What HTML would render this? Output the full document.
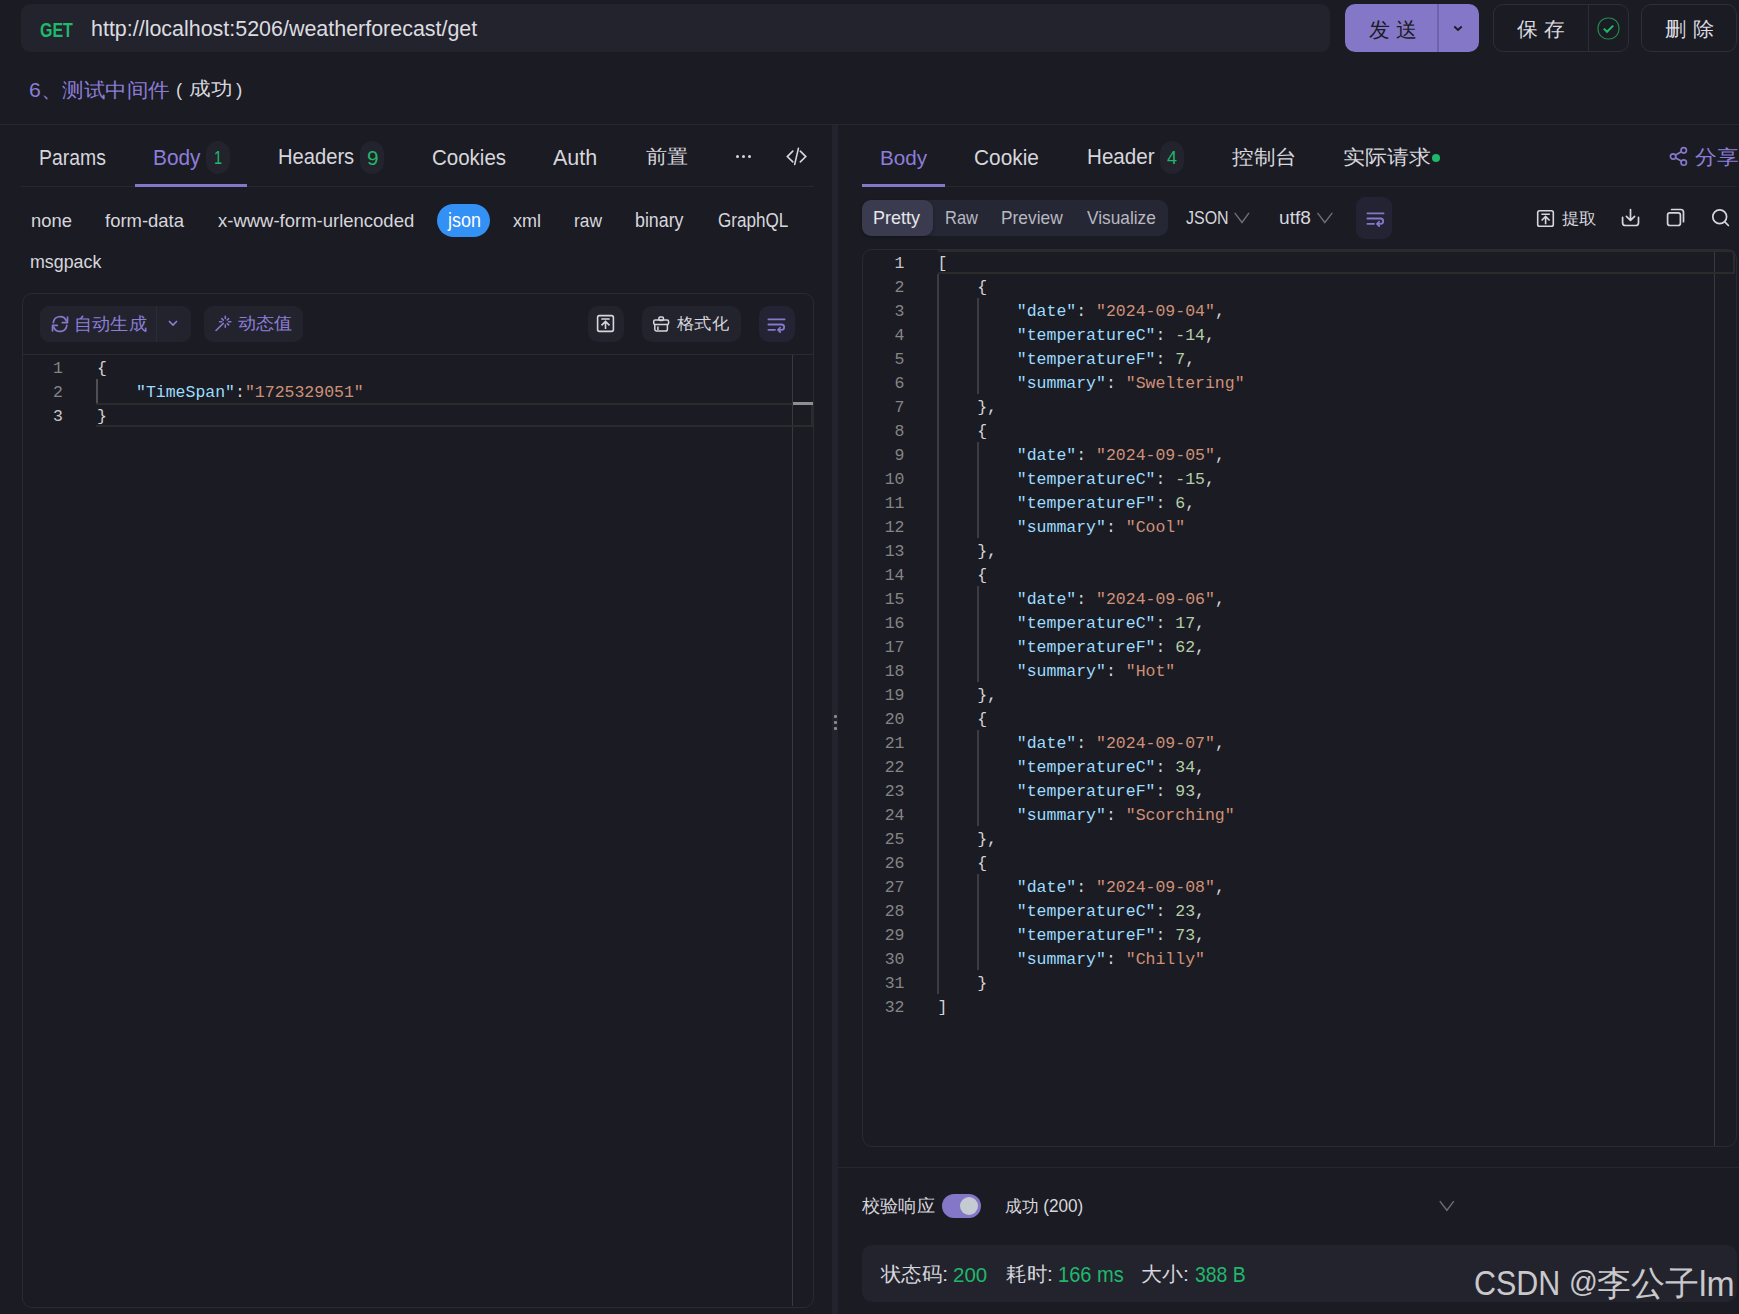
<!DOCTYPE html>
<html><head><meta charset="utf-8">
<style>
*{margin:0;padding:0;box-sizing:border-box}
html,body{width:1739px;height:1314px;overflow:hidden;background:#1b1b23;font-family:"Liberation Sans",sans-serif;color:#d6d6dc}
.a{position:absolute;white-space:nowrap}
.box{position:absolute}
.mono{font-family:"Liberation Mono",monospace}
.k{color:#9cdcfe}.s{color:#ce9178}.n{color:#b5cea8}.p{color:#d4d4d4}
.ln{position:absolute;text-align:right;color:#858585}
</style></head><body>
<!-- top URL bar -->
<div class="box" style="left:21px;top:4px;width:1309px;height:48px;background:#23232d;border-radius:9px"></div>
<!-- send -->
<div class="box" style="left:1345px;top:4px;width:134px;height:48px;background:#8577c8;border-radius:10px"></div>
<div class="box" style="left:1437px;top:4px;width:2px;height:48px;background:#6f62ad"></div>
<svg class="box" style="left:1450px;top:21px" width="16" height="14" viewBox="0 0 16 14"><path d="M4.3 5.5 L8 9 L11.7 5.5" stroke="#1b1b23" stroke-width="1.9" fill="none"/></svg>
<!-- save -->
<div class="box" style="left:1493px;top:4px;width:136px;height:48px;border:1px solid #2e2e3a;border-radius:10px"></div>
<div class="box" style="left:1588px;top:4px;width:1px;height:48px;background:#2e2e3a"></div>
<svg class="box" style="left:1597px;top:17px" width="23" height="23" viewBox="0 0 23 23"><rect x="1" y="1" width="21" height="21" rx="10" fill="none" stroke="#23884f" stroke-width="1.2"/><path d="M6.8 11.6 L10 14.8 L16.2 8.6" stroke="#1fb96a" stroke-width="2" fill="none"/></svg>
<!-- delete -->
<div class="box" style="left:1641px;top:4px;width:96px;height:48px;border:1px solid #2e2e3a;border-radius:10px"></div>
<div class="box" style="left:0;top:124px;width:1739px;height:1px;background:#272732"></div>

<!-- divider column -->
<div class="box" style="left:832px;top:125px;width:6px;height:1189px;background:#23232d"></div>
<div class="box" style="left:834px;top:715px;width:3px;height:3px;background:#8a8a8a;border-radius:1px"></div>
<div class="box" style="left:834px;top:721px;width:3px;height:3px;background:#8a8a8a;border-radius:1px"></div>
<div class="box" style="left:834px;top:727px;width:3px;height:3px;background:#8a8a8a;border-radius:1px"></div>

<!-- left tabs -->
<div class="box" style="left:206px;top:141px;width:24px;height:33px;border-radius:12px;background:#23232d"></div>
<div class="box" style="left:360px;top:141px;width:24px;height:33px;border-radius:12px;background:#23232d"></div>
<div class="box" style="left:735.7px;top:154.9px;width:3.5px;height:3.5px;background:#d6d6dc;border-radius:50%"></div>
<div class="box" style="left:741.7px;top:154.9px;width:3.5px;height:3.5px;background:#d6d6dc;border-radius:50%"></div>
<div class="box" style="left:747.9px;top:154.9px;width:3.5px;height:3.5px;background:#d6d6dc;border-radius:50%"></div>
<svg class="box" style="left:786px;top:146px" width="22" height="21" viewBox="0 0 22 21"><path d="M6.8 5.1 L1.3 10.6 L6.8 15.9 M14.3 5.1 L19.8 10.6 L14.3 15.9 M12.4 2.4 L8.7 18.4" stroke="#d6d6dc" stroke-width="1.6" fill="none" stroke-linecap="round"/></svg>
<div class="box" style="left:21px;top:186px;width:793px;height:1px;background:#272732"></div>
<div class="box" style="left:135px;top:184px;width:112px;height:3px;background:#8577c8"></div>
<div class="box" style="left:437px;top:204px;width:53px;height:33px;border-radius:17px;background:#3390f5"></div>

<!-- editor container -->
<div class="box" style="left:22px;top:293px;width:792px;height:1015px;border:1px solid #2a2a33;border-radius:10px"></div>
<div class="box" style="left:23px;top:354px;width:790px;height:1px;background:#2a2a33"></div>
<!-- toolbar -->
<div class="box" style="left:40px;top:306px;width:151px;height:36px;border-radius:9px;background:#23232e"></div>
<div class="box" style="left:156px;top:306px;width:1px;height:36px;background:#2c2c38"></div>
<svg class="box" style="left:46px;top:310px" width="30" height="28" viewBox="0 0 30 28"><path d="M7.3 12.6 A6.8 6.8 0 0 1 20.2 10.6 M21.5 7 V12.6 H16.3 M20.8 15.3 A6.8 6.8 0 0 1 7.8 17.3 M6.5 20.8 V15.4 H11.3" stroke="#8677c9" stroke-width="1.7" fill="none" stroke-linecap="round" stroke-linejoin="round"/></svg>
<svg class="box" style="left:165px;top:316px" width="16" height="14" viewBox="0 0 16 14"><path d="M4 5 L8 9 L12 5" stroke="#8c7ed8" stroke-width="1.6" fill="none"/></svg>
<div class="box" style="left:204px;top:306px;width:99px;height:36px;border-radius:9px;background:#23232e"></div>
<svg class="box" style="left:210px;top:310px" width="30" height="28" viewBox="0 0 30 28"><path d="M15.3 6.2 V8.4 M15.3 15.1 V17.3 M9.6 11.7 H11.8 M18.6 11.7 H20.8 M11.8 8.7 L13.3 10.1 M18.6 8.7 L17.2 10.0 M17.2 13.5 L18.6 14.9 M13.3 13.4 L6 20.5" stroke="#8677c9" stroke-width="1.6" fill="none" stroke-linecap="round"/></svg>
<div class="box" style="left:588px;top:306px;width:36px;height:36px;border-radius:10px;background:#23232e"></div>
<svg class="box" style="left:591px;top:309px" width="30" height="30" viewBox="0 0 30 30"><rect x="6.6" y="6.6" width="15.8" height="15.8" rx="1.8" stroke="#d6d6dc" stroke-width="1.6" fill="none"/><path d="M10.3 10 H18.7 M14.5 20.1 V12.6 M10.5 16.4 L14.5 12.4 L18.5 16.4" stroke="#d6d6dc" stroke-width="1.6" fill="none"/></svg>
<div class="box" style="left:642px;top:306px;width:99px;height:36px;border-radius:10px;background:#23232e"></div>
<svg class="box" style="left:645px;top:308px" width="30" height="30" viewBox="0 0 30 30"><rect x="13.9" y="8.9" width="4.5" height="3.6" rx="1.2" stroke="#d6d6dc" stroke-width="1.5" fill="none"/><rect x="8.7" y="12" width="14.9" height="4.4" rx="1.5" stroke="#d6d6dc" stroke-width="1.5" fill="none"/><path d="M9.8 16.4 V21.2 A1.8 1.8 0 0 0 11.6 23 H20.6 A1.8 1.8 0 0 0 22.4 21.2 V16.4 M12.9 18.5 V22" stroke="#d6d6dc" stroke-width="1.5" fill="none"/></svg>
<div class="box" style="left:759px;top:306px;width:36px;height:36px;border-radius:10px;background:#242333"></div>
<svg class="box" style="left:762px;top:309px" width="30" height="30" viewBox="0 0 30 30"><path d="M6.4 10.3 H22.6 M6.4 15.5 H19.5 A2.65 2.65 0 0 1 19.5 20.8 H16.5 M6.4 20.8 H13" stroke="#8677c9" stroke-width="1.8" fill="none" stroke-linecap="round"/><path d="M18.2 18.6 L16 20.8 L18.2 23" stroke="#8677c9" stroke-width="1.8" fill="none" stroke-linecap="round" stroke-linejoin="round"/></svg>

<!-- right tabs -->
<div class="box" style="left:1160px;top:141px;width:24px;height:33px;border-radius:12px;background:#23232d"></div>
<div class="box" style="left:1431.5px;top:154px;width:8px;height:8px;border-radius:50%;background:#1fb86a"></div>
<svg class="box" style="left:1664px;top:142px" width="30" height="30" viewBox="0 0 30 30"><circle cx="19.75" cy="8.33" r="2.7" stroke="#8677c9" stroke-width="1.7" fill="none"/><circle cx="9.13" cy="14.5" r="2.7" stroke="#8677c9" stroke-width="1.7" fill="none"/><circle cx="19.75" cy="20.55" r="2.7" stroke="#8677c9" stroke-width="1.7" fill="none"/><path d="M11.6 13.1 L17.3 9.8 M11.6 15.9 L17.3 19.1" stroke="#8677c9" stroke-width="1.7"/></svg>
<div class="box" style="left:862px;top:186px;width:875px;height:1px;background:#272732"></div>
<div class="box" style="left:862px;top:184px;width:83px;height:3px;background:#8577c8"></div>

<!-- segmented -->
<div class="box" style="left:862px;top:200px;width:306px;height:36px;border-radius:9px;background:#252735"></div>
<div class="box" style="left:862px;top:200px;width:71px;height:36px;border-radius:9px;background:#3b3b4f;box-shadow:0 1px 3px rgba(0,0,0,.35)"></div>
<svg class="box" style="left:1230px;top:208px" width="24" height="20" viewBox="0 0 24 20"><path d="M4.7 4.9 L12 14.5 L19 4.9" stroke="#6e6e78" stroke-width="1.4" fill="none"/></svg>
<svg class="box" style="left:1313px;top:208px" width="24" height="20" viewBox="0 0 24 20"><path d="M4.5 4.9 L11.8 14.5 L19.3 4.9" stroke="#6e6e78" stroke-width="1.4" fill="none"/></svg>
<div class="box" style="left:1356px;top:197px;width:36px;height:42px;border-radius:9px;background:#242333"></div>
<svg class="box" style="left:1360.5px;top:203px" width="30" height="30" viewBox="0 0 30 30"><path d="M6.4 10.3 H22.6 M6.4 15.5 H19.5 A2.65 2.65 0 0 1 19.5 20.8 H16.5 M6.4 20.8 H13" stroke="#8677c9" stroke-width="1.8" fill="none" stroke-linecap="round"/><path d="M18.2 18.6 L16 20.8 L18.2 23" stroke="#8677c9" stroke-width="1.8" fill="none" stroke-linecap="round" stroke-linejoin="round"/></svg>
<svg class="box" style="left:1530px;top:203px" width="30" height="30" viewBox="0 0 30 30"><rect x="7.7" y="7.7" width="15.6" height="15.6" rx="1.8" stroke="#d6d6dc" stroke-width="1.6" fill="none"/><path d="M11.4 11.2 H19.9 M15.6 21.2 V13.8 M11.6 17.5 L15.6 13.5 L19.6 17.5" stroke="#d6d6dc" stroke-width="1.6" fill="none"/></svg>
<svg class="box" style="left:1616px;top:203px" width="30" height="30" viewBox="0 0 30 30"><path d="M14.5 6.6 V17.2 M10.4 13.4 L14.5 17.4 L18.6 13.4 M6.6 14.4 V19.7 A2.8 2.8 0 0 0 9.4 22.5 H19.7 A2.8 2.8 0 0 0 22.5 19.7 V14.4" stroke="#d6d6dc" stroke-width="1.7" fill="none" stroke-linecap="round" stroke-linejoin="round"/></svg>
<svg class="box" style="left:1661px;top:203px" width="30" height="30" viewBox="0 0 30 30"><rect x="6.6" y="9.8" width="12.8" height="12.7" rx="2.3" stroke="#d6d6dc" stroke-width="1.7" fill="none"/><path d="M10.6 6.5 H19.8 A2.7 2.7 0 0 1 22.5 9.2 V18.7" stroke="#d6d6dc" stroke-width="1.7" fill="none" stroke-linecap="round"/></svg>
<svg class="box" style="left:1706px;top:203px" width="30" height="30" viewBox="0 0 30 30"><circle cx="13.7" cy="13.7" r="6.9" stroke="#d6d6dc" stroke-width="1.7" fill="none"/><path d="M18.8 18.8 L22.4 22.5" stroke="#d6d6dc" stroke-width="1.7" stroke-linecap="round"/></svg>

<!-- right editor -->
<div class="box" style="left:862px;top:249px;width:875px;height:898px;border:1px solid #2a2a33;border-radius:10px"></div>

<!-- bottom -->
<div class="box" style="left:838px;top:1167px;width:901px;height:1px;background:#272732"></div>
<div class="box" style="left:942px;top:1194px;width:39px;height:24px;border-radius:12px;background:#8577c8"></div>
<div class="box" style="left:960px;top:1197px;width:18px;height:18px;border-radius:50%;background:#c5cbd3"></div>
<svg class="box" style="left:1435px;top:1195px" width="24" height="20" viewBox="0 0 24 20"><path d="M4.8 6.1 L11.9 15.3 L18.8 6.1" stroke="#6c6f7a" stroke-width="1.4" fill="none"/></svg>
<div class="box" style="left:862px;top:1245px;width:875px;height:57px;border-radius:10px;background:#23232e"></div>

<!-- left code -->
<div class="box" style="left:792px;top:355px;width:1px;height:951px;background:#3a3a3e"></div>
<div class="box" style="left:96px;top:403px;width:717px;height:24px;border:2px solid #2b2b2b;border-left:none"></div>
<div class="box" style="left:793px;top:402px;width:20px;height:3px;background:#8f8f8f"></div>
<div class="box" style="left:96px;top:379px;width:2px;height:24px;background:#505054"></div>
<div class="mono" style="position:absolute;left:0;top:357px;font-size:16.5px;line-height:24px">
<div class="ln" style="left:30px;width:33px;top:0">1</div>
<div class="ln" style="left:30px;width:33px;top:24px">2</div>
<div class="ln" style="left:30px;width:33px;top:48px;color:#c6c6c6">3</div>
<div class="a p" style="left:97px;top:0">{</div>
<div class="a" style="left:136px;top:24px"><span class="k">"TimeSpan"</span><span class="p">:</span><span class="s">"1725329051"</span></div>
<div class="a p" style="left:97px;top:48px">}</div>
</div>
<!-- right code -->
<div class="box" style="left:1714px;top:250px;width:1px;height:896px;background:#3a3a3e"></div>
<div class="box" style="left:938px;top:250px;width:797px;height:24px;border:2px solid #2b2b2b;border-left:none;border-top-right-radius:4px"></div>
<div class="box" style="left:937px;top:274px;width:2px;height:720px;background:#3c3c40"></div>
<div class="box" style="left:977px;top:298px;width:2px;height:96px;background:#3c3c40"></div>
<div class="box" style="left:977px;top:442px;width:2px;height:96px;background:#3c3c40"></div>
<div class="box" style="left:977px;top:586px;width:2px;height:96px;background:#3c3c40"></div>
<div class="box" style="left:977px;top:730px;width:2px;height:96px;background:#3c3c40"></div>
<div class="box" style="left:977px;top:874px;width:2px;height:96px;background:#3c3c40"></div>
<div class="mono ln" style="left:870.5px;top:252px;width:34px;font-size:16.5px;line-height:24px;white-space:pre"><span style="color:#c6c6c6">1</span>
2
3
4
5
6
7
8
9
10
11
12
13
14
15
16
17
18
19
20
21
22
23
24
25
26
27
28
29
30
31
32</div>
<div class="mono" style="position:absolute;left:937.6px;top:252px;font-size:16.5px;line-height:24px;white-space:pre"><span class="p">[</span>
    <span class="p">{</span>
        <span class="k">"date"</span><span class="p">: </span><span class="s">"2024-09-04"</span><span class="p">,</span>
        <span class="k">"temperatureC"</span><span class="p">: </span><span class="n">-14</span><span class="p">,</span>
        <span class="k">"temperatureF"</span><span class="p">: </span><span class="n">7</span><span class="p">,</span>
        <span class="k">"summary"</span><span class="p">: </span><span class="s">"Sweltering"</span>
    <span class="p">},</span>
    <span class="p">{</span>
        <span class="k">"date"</span><span class="p">: </span><span class="s">"2024-09-05"</span><span class="p">,</span>
        <span class="k">"temperatureC"</span><span class="p">: </span><span class="n">-15</span><span class="p">,</span>
        <span class="k">"temperatureF"</span><span class="p">: </span><span class="n">6</span><span class="p">,</span>
        <span class="k">"summary"</span><span class="p">: </span><span class="s">"Cool"</span>
    <span class="p">},</span>
    <span class="p">{</span>
        <span class="k">"date"</span><span class="p">: </span><span class="s">"2024-09-06"</span><span class="p">,</span>
        <span class="k">"temperatureC"</span><span class="p">: </span><span class="n">17</span><span class="p">,</span>
        <span class="k">"temperatureF"</span><span class="p">: </span><span class="n">62</span><span class="p">,</span>
        <span class="k">"summary"</span><span class="p">: </span><span class="s">"Hot"</span>
    <span class="p">},</span>
    <span class="p">{</span>
        <span class="k">"date"</span><span class="p">: </span><span class="s">"2024-09-07"</span><span class="p">,</span>
        <span class="k">"temperatureC"</span><span class="p">: </span><span class="n">34</span><span class="p">,</span>
        <span class="k">"temperatureF"</span><span class="p">: </span><span class="n">93</span><span class="p">,</span>
        <span class="k">"summary"</span><span class="p">: </span><span class="s">"Scorching"</span>
    <span class="p">},</span>
    <span class="p">{</span>
        <span class="k">"date"</span><span class="p">: </span><span class="s">"2024-09-08"</span><span class="p">,</span>
        <span class="k">"temperatureC"</span><span class="p">: </span><span class="n">23</span><span class="p">,</span>
        <span class="k">"temperatureF"</span><span class="p">: </span><span class="n">73</span><span class="p">,</span>
        <span class="k">"summary"</span><span class="p">: </span><span class="s">"Chilly"</span>
    <span class="p">}</span>
<span class="p">]</span></div>

<div class="a" id="get" style="left:40.00px;top:19.32px;font-size:19.42px;line-height:23px;transform:scaleX(0.8246);transform-origin:0 0;font-weight:bold;color:#1eb96c">GET</div>
<div class="a" id="url" style="left:91.00px;top:14.82px;font-size:22.31px;line-height:27px;transform:scaleX(0.9618);transform-origin:0 0;color:#dcdce0">http://localhost:5206/weatherforecast/get</div>
<div class="a" id="send" style="left:1368.90px;top:16.90px;font-size:21.00px;line-height:25px;color:#1b1b23;letter-spacing:6px">发送</div>
<div class="a" id="save" style="left:1516.90px;top:16.78px;font-size:20.17px;line-height:24px;transform:scaleX(1.0404);transform-origin:0 0;letter-spacing:6px;color:#dcdce0">保存</div>
<div class="a" id="del" style="left:1664.90px;top:16.78px;font-size:20.17px;line-height:24px;transform:scaleX(1.0605);transform-origin:0 0;letter-spacing:6px;color:#dcdce0">删除</div>
<div class="a" id="t1" style="left:29.10px;top:77.90px;font-size:19.78px;line-height:24px;transform:scaleX(1.0760);transform-origin:0 0;color:#8c7ed8">6、测试中间件</div>
<div class="a" id="t2" style="left:175.74px;top:78.05px;font-size:19.09px;line-height:23px;transform:scaleX(0.9587);transform-origin:0 0;">(</div>
<div class="a" id="t3" style="left:188.60px;top:78.26px;font-size:18.68px;line-height:22px;transform:scaleX(1.1384);transform-origin:0 0;">成功</div>
<div class="a" id="t4" style="left:236.10px;top:78.05px;font-size:19.09px;line-height:23px;transform:scaleX(1.0011);transform-origin:0 0;">)</div>
<div class="a" id="params" style="left:38.58px;top:143.68px;font-size:22.69px;line-height:27px;transform:scaleX(0.8557);transform-origin:0 0;">Params</div>
<div class="a" id="lbody" style="left:152.82px;top:144.58px;font-size:21.49px;line-height:26px;transform:scaleX(0.9695);transform-origin:0 0;color:#8c7ed8">Body</div>
<div class="a" id="d1" style="left:213.72px;top:146.18px;font-size:19.15px;line-height:23px;transform:scaleX(0.7661);transform-origin:0 0;color:#1fb86a">1</div>
<div class="a" id="headers" style="left:278.00px;top:144.28px;font-size:21.50px;line-height:26px;transform:scaleX(0.9375);transform-origin:0 0;">Headers</div>
<div class="a" id="d9" style="left:366.64px;top:146.18px;font-size:19.79px;line-height:24px;transform:scaleX(1.0487);transform-origin:0 0;color:#1fb86a">9</div>
<div class="a" id="cookies" style="left:431.58px;top:144.22px;font-size:22.75px;line-height:27px;transform:scaleX(0.9010);transform-origin:0 0;">Cookies</div>
<div class="a" id="auth" style="left:553.36px;top:144.22px;font-size:22.75px;line-height:27px;transform:scaleX(0.9457);transform-origin:0 0;">Auth</div>
<div class="a" id="qz" style="left:646.44px;top:145.12px;font-size:19.00px;line-height:23px;transform:scaleX(1.1100);transform-origin:0 0;">前置</div>
<div class="a" id="none" style="left:30.64px;top:210.94px;font-size:17.62px;line-height:21px;transform:scaleX(1.0458);transform-origin:0 0;">none</div>
<div class="a" id="fd" style="left:105.08px;top:209.08px;font-size:18.78px;line-height:23px;transform:scaleX(0.9833);transform-origin:0 0;">form-data</div>
<div class="a" id="xw" style="left:217.78px;top:209.08px;font-size:18.78px;line-height:23px;transform:scaleX(0.9850);transform-origin:0 0;">x-www-form-urlencoded</div>
<div class="a" id="json" style="left:447.90px;top:209.08px;font-size:19.34px;line-height:23px;transform:scaleX(0.9285);transform-origin:0 0;color:#fff">json</div>
<div class="a" id="xml" style="left:513.00px;top:209.08px;font-size:19.26px;line-height:23px;transform:scaleX(0.9340);transform-origin:0 0;">xml</div>
<div class="a" id="raw" style="left:573.58px;top:210.34px;font-size:18.46px;line-height:22px;transform:scaleX(0.9410);transform-origin:0 0;">raw</div>
<div class="a" id="binary" style="left:635.46px;top:209.08px;font-size:19.34px;line-height:23px;transform:scaleX(0.9218);transform-origin:0 0;">binary</div>
<div class="a" id="gql" style="left:718.42px;top:209.08px;font-size:19.34px;line-height:23px;transform:scaleX(0.8841);transform-origin:0 0;">GraphQL</div>
<div class="a" id="msgpack" style="left:30.22px;top:249.90px;font-size:19.11px;line-height:23px;transform:scaleX(0.9329);transform-origin:0 0;">msgpack</div>
<div class="a" id="zdsc" style="left:74.10px;top:313.28px;font-size:18.28px;line-height:22px;transform:scaleX(1.0111);transform-origin:0 0;color:#8c7ed8">自动生成</div>
<div class="a" id="dtz" style="left:238.00px;top:313.70px;font-size:17.00px;line-height:20px;transform:scaleX(1.0642);transform-origin:0 0;color:#8c7ed8">动态值</div>
<div class="a" id="gsh" style="left:676.72px;top:313.40px;font-size:16.49px;line-height:20px;transform:scaleX(1.0809);transform-origin:0 0;">格式化</div>
<div class="a" id="rbody" style="left:879.58px;top:145.48px;font-size:20.85px;line-height:25px;transform:scaleX(0.9905);transform-origin:0 0;color:#8c7ed8">Body</div>
<div class="a" id="cookie" style="left:974.22px;top:144.82px;font-size:21.50px;line-height:26px;transform:scaleX(0.9692);transform-origin:0 0;">Cookie</div>
<div class="a" id="header" style="left:1087.00px;top:143.26px;font-size:22.66px;line-height:27px;transform:scaleX(0.9104);transform-origin:0 0;">Header</div>
<div class="a" id="d4" style="left:1167.18px;top:146.48px;font-size:18.94px;line-height:23px;transform:scaleX(0.9498);transform-origin:0 0;color:#1fb86a">4</div>
<div class="a" id="kzt" style="left:1232.18px;top:144.76px;font-size:19.92px;line-height:24px;transform:scaleX(1.0773);transform-origin:0 0;">控制台</div>
<div class="a" id="sjqq" style="left:1342.58px;top:145.54px;font-size:19.58px;line-height:23px;transform:scaleX(1.0976);transform-origin:0 0;">实际请求</div>
<div class="a" id="share" style="left:1695.00px;top:145.54px;font-size:19.58px;line-height:23px;transform:scaleX(1.0859);transform-origin:0 0;color:#8c7ed8">分享</div>
<div class="a" id="pretty" style="left:873.22px;top:206.18px;font-size:18.92px;line-height:23px;transform:scaleX(0.9520);transform-origin:0 0;color:#e6e6ea">Pretty</div>
<div class="a" id="rraw" style="left:944.64px;top:206.18px;font-size:18.94px;line-height:23px;transform:scaleX(0.8703);transform-origin:0 0;color:#b8b8c0">Raw</div>
<div class="a" id="preview" style="left:1001.10px;top:207.08px;font-size:18.19px;line-height:22px;transform:scaleX(0.9531);transform-origin:0 0;color:#b8b8c0">Preview</div>
<div class="a" id="visualize" style="left:1086.58px;top:207.08px;font-size:18.19px;line-height:22px;transform:scaleX(0.9501);transform-origin:0 0;color:#b8b8c0">Visualize</div>
<div class="a" id="jsonr" style="left:1186.00px;top:206.36px;font-size:18.94px;line-height:23px;transform:scaleX(0.8435);transform-origin:0 0;">JSON</div>
<div class="a" id="utf8" style="left:1278.92px;top:206.24px;font-size:18.90px;line-height:23px;transform:scaleX(1.0118);transform-origin:0 0;">utf8</div>
<div class="a" id="tq" style="left:1562.00px;top:208.70px;font-size:16.00px;line-height:19px;transform:scaleX(1.0929);transform-origin:0 0;">提取</div>
<div class="a" id="jyxy" style="left:862.00px;top:1196.38px;font-size:17.80px;line-height:21px;transform:scaleX(1.0100);transform-origin:0 0;">校验响应</div>
<div class="a" id="cg" style="left:1005.00px;top:1196.46px;font-size:17.45px;line-height:21px;transform:scaleX(0.9841);transform-origin:0 0;">成功 (200)</div>
<div class="a" id="ztm" style="left:880.90px;top:1262.00px;font-size:20.31px;line-height:24px;transform:scaleX(1.0191);transform-origin:0 0;">状态码:</div>
<div class="a" id="v200" style="left:953.10px;top:1261.58px;font-size:21.01px;line-height:25px;transform:scaleX(0.9764);transform-origin:0 0;color:#1fb86a">200</div>
<div class="a" id="hs" style="left:1005.78px;top:1262.00px;font-size:20.31px;line-height:24px;transform:scaleX(1.0263);transform-origin:0 0;">耗时:</div>
<div class="a" id="v166" style="left:1058.40px;top:1261.58px;font-size:21.37px;line-height:26px;transform:scaleX(0.9383);transform-origin:0 0;color:#1fb86a">166 ms</div>
<div class="a" id="dx" style="left:1141.40px;top:1262.00px;font-size:20.31px;line-height:24px;transform:scaleX(1.0482);transform-origin:0 0;">大小:</div>
<div class="a" id="v388" style="left:1195.22px;top:1261.58px;font-size:21.37px;line-height:26px;transform:scaleX(0.9079);transform-origin:0 0;color:#1fb86a">388 B</div>
<div class="a" id="csdnA" style="left:1474.42px;top:1262.49px;font-size:35.75px;line-height:43px;transform:scaleX(0.8518);transform-origin:0 0;color:#c9c9cc">CSDN</div>
<div class="a" id="csdnAt" style="left:1568.53px;top:1264.71px;font-size:29.18px;line-height:35px;transform:scaleX(0.9724);transform-origin:0 0;color:#c9c9cc">@</div>
<div class="a" id="csdnB" style="left:1597.10px;top:1262.60px;font-size:33.80px;line-height:41px;transform:scaleX(1.0005);transform-origin:0 0;color:#c9c9cc">李公子</div>
<div class="a" id="csdnC" style="left:1698.56px;top:1264.29px;font-size:34.17px;line-height:41px;transform:scaleX(0.9889);transform-origin:0 0;color:#c9c9cc">lm</div>
</body></html>
